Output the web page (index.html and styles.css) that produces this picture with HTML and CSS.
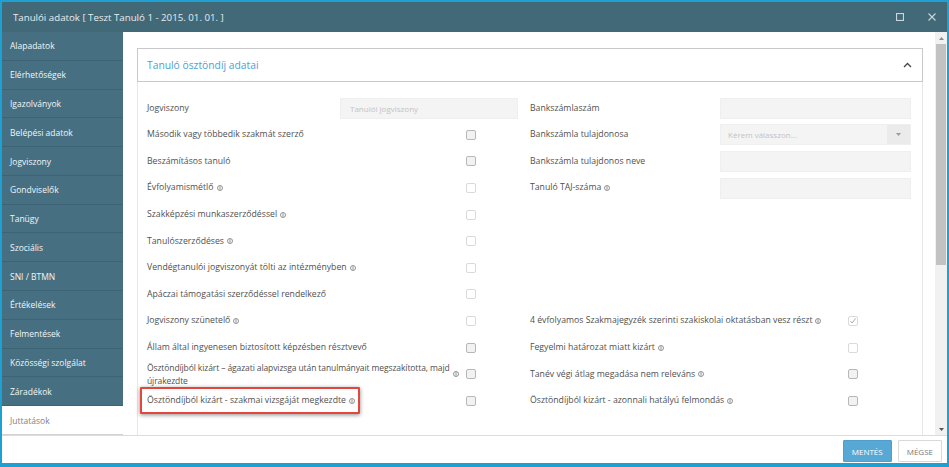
FILE: index.html
```html
<!DOCTYPE html>
<html lang="hu">
<head>
<meta charset="utf-8">
<title>Tanulói adatok</title>
<link rel="stylesheet" href="styles.css">
</head>
<body>
<div class="window">
  <div class="titlebar">
    <span class="title">Tanulói adatok [ Teszt Tanuló 1 - 2015. 01. 01. ]</span>
    <div class="tb-icons">
      <svg class="tb-icon" width="8" height="8" viewBox="0 0 8 8"><rect x="0.5" y="0.5" width="7" height="7" fill="none" stroke="#c9d5da" stroke-width="1.2"/></svg>
      <svg class="tb-icon" width="8" height="8" viewBox="0 0 8 8"><path d="M0.5 0.5 L7.5 7.5 M7.5 0.5 L0.5 7.5" stroke="#c9d5da" stroke-width="1.1"/></svg>
    </div>
  </div>
  <div class="main">
    <nav class="sidebar">
      <a class="nav-item">Alapadatok</a>
      <a class="nav-item">Elérhetőségek</a>
      <a class="nav-item">Igazolványok</a>
      <a class="nav-item">Belépési adatok</a>
      <a class="nav-item">Jogviszony</a>
      <a class="nav-item">Gondviselők</a>
      <a class="nav-item">Tanügy</a>
      <a class="nav-item">Szociális</a>
      <a class="nav-item">SNI / BTMN</a>
      <a class="nav-item">Értékelések</a>
      <a class="nav-item">Felmentések</a>
      <a class="nav-item">Közösségi szolgálat</a>
      <a class="nav-item">Záradékok</a>
      <a class="nav-item active">Juttatások</a>
    </nav>
    <div class="content">
      <div class="scroll-body">
        <section class="panel">
          <header class="panel-head">
            <h2>Tanuló ösztöndíj adatai</h2>
            <svg class="chev" width="9" height="6" viewBox="0 0 9 6"><polyline points="1,5 4.5,1.5 8,5" fill="none" stroke="#444" stroke-width="1.3"/></svg>
          </header>
          <div class="panel-body">
            <div class="form-grid">
              <!-- row 1 -->
              <div class="row l"><span class="lbl fix-l">Jogviszony</span><div class="input w-l">Tanulói jogviszony</div></div>
              <div class="row r"><span class="lbl fix-r">Bankszámlaszám</span><div class="input w-r"></div></div>
              <!-- row 2 -->
              <div class="row l"><span class="lbl"><span class="txt">Második vagy többedik szakmát szerző</span></span><span class="cb"></span></div>
              <div class="row r"><span class="lbl fix-r">Bankszámla tulajdonosa</span><div class="input w-r select"><span class="sel-text">Kérem válasszon...</span><span class="sel-arrow"><svg width="5" height="3" viewBox="0 0 5 3"><polygon points="0,0 5,0 2.5,3" fill="#9a9a9a"/></svg></span></div></div>
              <!-- row 3 -->
              <div class="row l"><span class="lbl"><span class="txt">Beszámításos tanuló</span></span><span class="cb"></span></div>
              <div class="row r"><span class="lbl fix-r">Bankszámla tulajdonos neve</span><div class="input w-r"></div></div>
              <!-- row 4 -->
              <div class="row l"><span class="lbl"><span class="txt">Évfolyamismétlő</span><svg class="info" width="6" height="6" viewBox="0 0 6 6"><circle cx="3" cy="3" r="2.5" fill="none" stroke="#777" stroke-width="0.8"/><path d="M3 1.2 V4.8" stroke="#777" stroke-width="0.8"/></svg></span><span class="cb lt"></span></div>
              <div class="row r"><span class="lbl fix-r">Tanuló TAJ-száma<svg class="info" width="6" height="6" viewBox="0 0 6 6"><circle cx="3" cy="3" r="2.5" fill="none" stroke="#777" stroke-width="0.8"/><path d="M3 1.2 V4.8" stroke="#777" stroke-width="0.8"/></svg></span><div class="input w-r"></div></div>
              <!-- row 5 -->
              <div class="row l"><span class="lbl"><span class="txt">Szakképzési munkaszerződéssel</span><svg class="info" width="6" height="6" viewBox="0 0 6 6"><circle cx="3" cy="3" r="2.5" fill="none" stroke="#777" stroke-width="0.8"/><path d="M3 1.2 V4.8" stroke="#777" stroke-width="0.8"/></svg></span><span class="cb lt"></span></div>
              <div class="row r"></div>
              <!-- row 6 -->
              <div class="row l"><span class="lbl"><span class="txt">Tanulószerződéses</span><svg class="info" width="6" height="6" viewBox="0 0 6 6"><circle cx="3" cy="3" r="2.5" fill="none" stroke="#777" stroke-width="0.8"/><path d="M3 1.2 V4.8" stroke="#777" stroke-width="0.8"/></svg></span><span class="cb lt"></span></div>
              <div class="row r"></div>
              <!-- row 7 -->
              <div class="row l"><span class="lbl"><span class="txt">Vendégtanulói jogviszonyát tölti az intézményben</span><svg class="info" width="6" height="6" viewBox="0 0 6 6"><circle cx="3" cy="3" r="2.5" fill="none" stroke="#777" stroke-width="0.8"/><path d="M3 1.2 V4.8" stroke="#777" stroke-width="0.8"/></svg></span><span class="cb lt"></span></div>
              <div class="row r"></div>
              <!-- row 8 -->
              <div class="row l"><span class="lbl"><span class="txt">Apáczai támogatási szerződéssel rendelkező</span></span><span class="cb lt"></span></div>
              <div class="row r"></div>
              <!-- row 9 -->
              <div class="row l"><span class="lbl"><span class="txt">Jogviszony szünetelő</span><svg class="info" width="6" height="6" viewBox="0 0 6 6"><circle cx="3" cy="3" r="2.5" fill="none" stroke="#777" stroke-width="0.8"/><path d="M3 1.2 V4.8" stroke="#777" stroke-width="0.8"/></svg></span><span class="cb lt"></span></div>
              <div class="row r"><span class="lbl"><span class="txt">4 évfolyamos Szakmajegyzék szerinti szakiskolai oktatásban vesz részt</span><svg class="info" width="6" height="6" viewBox="0 0 6 6"><circle cx="3" cy="3" r="2.5" fill="none" stroke="#777" stroke-width="0.8"/><path d="M3 1.2 V4.8" stroke="#777" stroke-width="0.8"/></svg></span><span class="cb lt on"><svg width="8" height="8" viewBox="0 0 8 8"><polyline points="1.5,4.2 3.2,6 6.5,1.5" fill="none" stroke="#a8a8a8" stroke-width="1"/></svg></span></div>
              <!-- row 10 -->
              <div class="row l"><span class="lbl"><span class="txt">Állam által ingyenesen biztosított képzésben résztvevő</span></span><span class="cb"></span></div>
              <div class="row r"><span class="lbl"><span class="txt">Fegyelmi határozat miatt kizárt</span><svg class="info" width="6" height="6" viewBox="0 0 6 6"><circle cx="3" cy="3" r="2.5" fill="none" stroke="#777" stroke-width="0.8"/><path d="M3 1.2 V4.8" stroke="#777" stroke-width="0.8"/></svg></span><span class="cb lt"></span></div>
              <!-- row 11 -->
              <div class="row l"><span class="lbl"><span class="txt wrap">Ösztöndíjból kizárt – ágazati alapvizsga után tanulmányait megszakította, majd<br>újrakezdte</span><svg class="info" width="6" height="6" viewBox="0 0 6 6"><circle cx="3" cy="3" r="2.5" fill="none" stroke="#777" stroke-width="0.8"/><path d="M3 1.2 V4.8" stroke="#777" stroke-width="0.8"/></svg></span><span class="cb"></span></div>
              <div class="row r"><span class="lbl"><span class="txt">Tanév végi átlag megadása nem releváns</span><svg class="info" width="6" height="6" viewBox="0 0 6 6"><circle cx="3" cy="3" r="2.5" fill="none" stroke="#777" stroke-width="0.8"/><path d="M3 1.2 V4.8" stroke="#777" stroke-width="0.8"/></svg></span><span class="cb"></span></div>
              <!-- row 12 -->
              <div class="row l"><span class="lbl"><span class="hl"><span class="txt">Ösztöndíjból kizárt - szakmai vizsgáját megkezdte</span><svg class="info" width="6" height="6" viewBox="0 0 6 6"><circle cx="3" cy="3" r="2.5" fill="none" stroke="#777" stroke-width="0.8"/><path d="M3 1.2 V4.8" stroke="#777" stroke-width="0.8"/></svg></span></span><span class="cb"></span></div>
              <div class="row r"><span class="lbl"><span class="txt">Ösztöndíjból kizárt - azonnali hatályú felmondás</span><svg class="info" width="6" height="6" viewBox="0 0 6 6"><circle cx="3" cy="3" r="2.5" fill="none" stroke="#777" stroke-width="0.8"/><path d="M3 1.2 V4.8" stroke="#777" stroke-width="0.8"/></svg></span><span class="cb"></span></div>
            </div>
          </div>
        </section>
      </div>
      <div class="scrollbar">
        <div class="sb-arrow"><svg width="5" height="3" viewBox="0 0 5 3"><polygon points="0,3 5,3 2.5,0" fill="#8a8a8a"/></svg></div>
        <div class="sb-thumb"></div>
        <div class="sb-arrow down"><svg width="5" height="3" viewBox="0 0 5 3"><polygon points="0,0 5,0 2.5,3" fill="#555"/></svg></div>
      </div>
    </div>
  </div>
  <footer class="footer">
    <button class="btn primary">MENTÉS</button>
    <button class="btn">MÉGSE</button>
  </footer>
</div>
</body>
</html>
```

FILE: styles.css
```css
html, body {
  margin: 0;
  padding: 0;
  background: #fff;
}

body {
  font-family: "Open Sans", "Liberation Sans", sans-serif;
}

.window {
  width: 949px;
  height: 467px;
  box-sizing: border-box;
  border: 2px solid #1fa0d3;
  border-bottom-width: 4px;
  display: flex;
  flex-direction: column;
  background: #fff;
  overflow: hidden;
}

/* title bar */
.titlebar {
  height: 30px;
  flex: none;
  background: #426978;
  color: #e6edf0;
  display: flex;
  align-items: center;
  padding: 0 11px 0 11px;
  font-size: 9.7px;
}

.tb-icons {
  margin-left: auto;
  display: flex;
  align-items: center;
  gap: 24px;
}

.tb-icon {
  display: block;
}

/* main area */
.main {
  height: 403px;
  flex: none;
  display: flex;
}

.sidebar {
  width: 121px;
  flex: none;
  background: #467082;
  display: flex;
  flex-direction: column;
}

.nav-item {
  flex: 1;
  display: flex;
  align-items: center;
  padding-left: 8px;
  color: #f1f5f7;
  font-size: 8.5px;
  border-bottom: 1px solid #3d6475;
  text-decoration: none;
}

.nav-item.active {
  background: #fff;
  color: #877c84;
  border-bottom-color: #d3d3d3;
}

.content {
  flex: 1;
  display: flex;
  min-width: 0;
}

.scroll-body {
  flex: 1;
  overflow: hidden;
  padding: 16px 12px 0 14px;
}

/* panel */
.panel-head {
  height: 32px;
  border: 1px solid #c9c9c9;
  display: flex;
  align-items: center;
  justify-content: space-between;
  padding: 0 10px 0 9px;
}

.panel-head h2 {
  margin: 0;
  font-weight: 400;
  font-size: 10.3px;
  color: #4c9fd6;
}

.chev {
  display: block;
}

.panel-body {
  border-left: 1px solid #e7e7e7;
  border-right: 1px solid #e7e7e7;
  padding: 13px 11px 60px 9px;
}

.form-grid {
  display: grid;
  grid-template-columns: 371px 381px;
  column-gap: 12px;
  grid-auto-rows: 26.6px;
}

.row {
  display: flex;
  align-items: center;
  min-width: 0;
}

.lbl {
  flex: 1;
  min-width: 0;
  display: flex;
  align-items: center;
  font-size: 8.7px;
  line-height: 13.3px;
  color: #505050;
}

.lbl.fix-l {
  flex: none;
  width: 193px;
}

.lbl.fix-r {
  flex: none;
  width: 190px;
}

.txt {
  white-space: nowrap;
}

.txt.wrap {
  white-space: nowrap;
  font-size: 8.5px;
  letter-spacing: -0.1px;
}

.info {
  flex: none;
  margin-left: 3px;
  display: block;
}

.hl {
  position: relative;
  display: flex;
  align-items: center;
}

.hl::after {
  content: "";
  position: absolute;
  left: -7px;
  right: -5px;
  top: -7px;
  bottom: -7px;
  border: 2px solid #e3473b;
  border-radius: 1px;
  box-shadow: 0 1px 4px rgba(0, 0, 0, 0.45);
  pointer-events: none;
}

/* inputs */
.input {
  height: 21px;
  box-sizing: border-box;
  background: #f4f4f4;
  border: 1px solid #efefef;
  font-size: 8px;
  color: #c3c3c3;
  padding-left: 9px;
  display: flex;
  align-items: center;
}

.input.w-l {
  width: 178px;
}

.input.w-r {
  width: 191px;
}

.input.select {
  padding-left: 7px;
  padding-right: 0;
}

.sel-text {
  flex: 1;
}

.sel-arrow {
  width: 23px;
  height: 100%;
  background: #ebebeb;
  display: flex;
  align-items: center;
  justify-content: center;
}

.sel-arrow svg {
  display: block;
}

/* checkboxes */
.cb {
  flex: none;
  width: 10px;
  height: 10px;
  box-sizing: border-box;
  border: 1px solid #b7b7b7;
  border-radius: 2px;
  background: #f2f2f2;
  margin-left: 4px;
  display: flex;
  align-items: center;
  justify-content: center;
}

.cb.lt {
  border-color: #dadada;
  background: #fff;
}

.cb svg {
  display: block;
}

.row.l .cb {
  margin-right: 42px;
}

.row.r .cb {
  margin-right: 53px;
}

/* scrollbar */
.scrollbar {
  width: 12px;
  flex: none;
  background: #f1f1f1;
  display: flex;
  flex-direction: column;
  align-items: center;
}

.sb-arrow {
  height: 12px;
  width: 100%;
  display: flex;
  align-items: center;
  justify-content: center;
  flex: none;
}

.sb-arrow.down {
  margin-top: auto;
}

.sb-thumb {
  width: 10px;
  height: 221px;
  background: #c2c2c2;
  flex: none;
}

/* footer */
.footer {
  flex: none;
  height: 28px;
  box-sizing: border-box;
  border-top: 1px solid #dcdcdc;
  display: flex;
  justify-content: flex-end;
  align-items: flex-start;
  padding: 4px 5px 0 0;
  gap: 6px;
}

.btn {
  height: 22px;
  padding: 0 8px;
  font-family: "Open Sans", "Liberation Sans", sans-serif;
  font-size: 8px;
  background: #fff;
  border: 1px solid #d9d9d9;
  color: #777;
  border-radius: 1px;
}

.btn.primary {
  background: #58a8d6;
  border-color: #4e9fcf;
  color: #fff;
}
```
